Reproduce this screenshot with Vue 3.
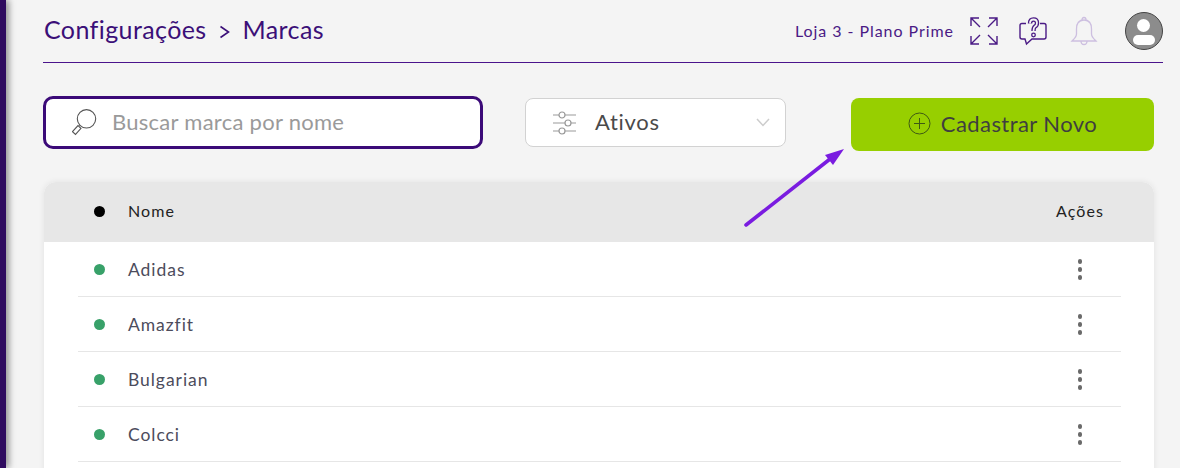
<script setup>
const brands = ['Adidas', 'Amazfit', 'Bulgarian', 'Colcci']
</script>

<template>
  <div class="page">
    <aside class="side"></aside>
    <main class="content">
      <header class="top">
        <div class="crumbs">
          <span class="crumb">Configurações</span>
          <svg class="crumb-arrow" width="10" height="14" viewBox="0 0 10 14">
            <path d="M0.5 1.5 L8.5 7 L0.5 12.500" fill="none" stroke="#3b0f78" stroke-width="1.6" />
          </svg>
          <span class="crumb">Marcas</span>
        </div>
        <div class="top-right">
          <span class="store">Loja 3 - Plano Prime</span>
          <svg class="icon-expand" width="30" height="30" viewBox="0 0 30 30" fill="none" stroke="#4a1a85" stroke-width="1.4">
            <path d="M2 10 V2 H10 M2 2 L11 11" />
            <path d="M20 2 H28 V10 M28 2 L19 11" />
            <path d="M2 20 V28 H10 M2 28 L11 19" />
            <path d="M20 28 H28 V20 M28 28 L19 19" />
          </svg>
          <svg class="icon-help" width="30" height="30" viewBox="0 0 30 30" fill="none">
            <path d="M7 7.500 H3 Q1 7.500 1 9.500 V21 Q1 23 3 23 H6 L7.500 28 L13 23 H25 Q27 23 27 21 V9.500 Q27 7.500 25 7.500 H21" stroke="#4a1a85" stroke-width="1.4" />
            <path d="M11 7.500 Q11 3.500 14.500 3.500 Q18 3.500 18 7 Q18 9.500 16 10.500 Q14.500 11.500 14.500 15" stroke="#4a1a85" stroke-width="4.400" />
            <path d="M11 7.500 Q11 3.500 14.500 3.500 Q18 3.500 18 7 Q18 9.500 16 10.500 Q14.500 11.500 14.500 15" stroke="#f4f4f4" stroke-width="1.800" />
            <circle cx="14.500" cy="19" r="1.800" stroke="#4a1a85" stroke-width="1.300" />
          </svg>
          <svg class="icon-bell" width="28" height="30" viewBox="0 0 28 30" fill="none" stroke="#cdbfe0" stroke-width="1.3">
            <path d="M14 4 C8 4 6.500 9 6.500 13 V18 C6.500 21 4 23 2 25 H26 C24 23 21.500 21 21.500 18 V13 C21.500 9 20 4 14 4 Z" />
            <path d="M12 4 Q12 1.500 14 1.500 Q16 1.500 16 4" />
            <path d="M11 25 Q11 28.500 14 28.500 Q17 28.500 17 25" />
          </svg>
          <div class="avatar">
            <span class="avatar-head"></span>
            <span class="avatar-body"></span>
          </div>
        </div>
      </header>

      <section class="filters">
        <div class="search">
          <svg width="28" height="28" viewBox="0 0 28 28" fill="none" stroke="#555" stroke-width="1.100">
            <circle cx="14.500" cy="9.800" r="9.200" />
            <path d="M8 16 L7.500 16.500 M9 19.400 L6 16.600 L0.500 22.600 L3.500 25.400 Z" />
          </svg>
          <span class="search-text">Buscar marca por nome</span>
        </div>
        <div class="select">
          <svg width="24" height="24" viewBox="0 0 24 24" fill="none" stroke="#999" stroke-width="1.200">
            <path d="M1 4 H7 M13 4 H24 M1 12 H13 M19 12 H24 M1 20 H7 M13 20 H24" />
            <circle cx="10" cy="4" r="3" />
            <circle cx="16" cy="12" r="3" />
            <circle cx="10" cy="20" r="3" />
          </svg>
          <span class="select-label">Ativos</span>
          <svg class="chevron" width="14" height="9" viewBox="0 0 14 9" fill="none" stroke="#ccc" stroke-width="1.500">
            <path d="M1 1 L7 7.500 L13 1" />
          </svg>
        </div>
        <button class="add">
          <svg width="23" height="23" viewBox="0 0 23 23" fill="none" stroke="#3f5a14" stroke-width="1">
            <circle cx="11.500" cy="11.500" r="10.500" />
            <path d="M11.500 6 V17 M6 11.500 H17" />
          </svg>
          <span class="add-text">Cadastrar Novo</span>
        </button>
      </section>

      <section class="table">
        <div class="thead">
          <span class="dot dot-black"></span>
          <span class="col-name">Nome</span>
          <span class="col-actions">Ações</span>
        </div>
        <div class="tbody">
          <div v-for="brand in brands" :key="brand" class="row">
            <span class="dot dot-green"></span>
            <span class="col-name">{{ brand }}</span>
            <span class="kebab"><i></i><i></i><i></i></span>
          </div>
        </div>
      </section>
    </main>

    <svg class="annotation" width="120" height="90" viewBox="0 0 120 90">
      <path d="M6 79 L90 13" stroke="#7a1ce0" stroke-width="3.600" stroke-linecap="round" fill="none" />
      <path d="M104 3 L85 9 L93 19 Z" fill="#7a1ce0" />
    </svg>
  </div>
</template>

<style>
html,
body {
  margin: 0;
  background: #f4f4f4;
}
</style>

<style scoped>
.page {
  position: relative;
  display: flex;
  width: 1180px;
  height: 468px;
  overflow: hidden;
  background: #f4f4f4;
  font-family: Lato, 'Noto Sans', sans-serif;
}

.side {
  flex: 0 0 6px;
  background: #2e0a5e;
  box-shadow: 2px 0 7px rgba(0, 0, 0, 0.55);
}

.content {
  flex: 1;
  padding-left: 37px;
  padding-right: 17px;
}

.top {
  display: flex;
  align-items: center;
  justify-content: space-between;
  height: 62px;
  border-bottom: 1px solid #4a148c;
}

.crumbs {
  display: flex;
  align-items: center;
  gap: 13px;
  margin-left: 1px;
  color: #3b0f78;
  font-size: 25px;
  letter-spacing: 0.4px;
}

.crumb {
  padding-bottom: 4px;
}

.crumb-arrow {
  margin-top: 1px;
}

.top-right {
  display: flex;
  align-items: center;
}

.store {
  padding-bottom: 2px;
  color: #4a1a85;
  font-size: 16px;
  letter-spacing: 0.95px;
}

.icon-expand {
  margin-left: 15px;
}

.icon-help {
  margin-left: 20px;
}

.icon-bell {
  margin-left: 21px;
}

.avatar {
  position: relative;
  width: 36px;
  height: 36px;
  margin-left: 27px;
  border: 1.500px solid #444;
  border-radius: 50%;
  background: #8c8c8c;
  overflow: hidden;
}

.avatar-head {
  position: absolute;
  top: 6px;
  left: 11px;
  width: 13px;
  height: 13px;
  border-radius: 50%;
  background: #fff;
}

.avatar-body {
  position: absolute;
  top: 22px;
  left: 7px;
  width: 22px;
  height: 10px;
  border-radius: 7px;
  background: #fff;
}

.filters {
  display: flex;
  align-items: flex-start;
  margin-top: 33px;
}

.search {
  display: flex;
  align-items: center;
  gap: 12px;
  box-sizing: border-box;
  width: 440px;
  height: 53px;
  padding-left: 26px;
  border: 3px solid #3b0a78;
  border-radius: 10px;
  background: #fff;
  color: #9a9a9a;
  font-size: 22px;
  letter-spacing: 0.27px;
}

.search-text {
  padding-bottom: 3px;
}

.select {
  display: flex;
  align-items: center;
  box-sizing: border-box;
  width: 261px;
  height: 49px;
  margin-top: 2px;
  margin-left: 42px;
  padding-left: 26px;
  padding-right: 15px;
  border: 1px solid #d2d2d2;
  border-radius: 8px;
  background: #fff;
  color: #4a4a4a;
  font-size: 22px;
  letter-spacing: 0.7px;
}

.select-label {
  margin-left: 19px;
  padding-bottom: 3px;
}

.chevron {
  margin-left: auto;
}

.add {
  display: flex;
  align-items: center;
  justify-content: center;
  gap: 10px;
  width: 303px;
  height: 53px;
  margin-top: 2px;
  margin-left: 65px;
  padding: 0 0 2px;
  border: 0;
  border-radius: 8px;
  background: #97cf00;
  color: #3f3f3f;
  font-family: inherit;
  font-size: 22px;
  letter-spacing: 0.43px;
}

.table {
  width: 1110px;
  min-height: 320px;
  margin-top: 31px;
  margin-left: 1px;
  border-radius: 12px 12px 0 0;
  background: #fff;
  box-shadow: 0 0 6px rgba(0, 0, 0, 0.08);
}

.thead {
  display: flex;
  align-items: center;
  height: 60px;
  padding-left: 50px;
  padding-right: 50px;
  border-radius: 12px 12px 0 0;
  background: #e7e7e7;
  color: #222;
  font-size: 16px;
  letter-spacing: 1.1px;
}

.thead .col-name,
.thead .col-actions {
  padding-bottom: 3px;
}

.thead .dot {
  margin-bottom: 1px;
}

.dot {
  width: 11px;
  height: 11px;
  border-radius: 50%;
}

.dot-black {
  background: #000;
}

.dot-green {
  background: #38a169;
}

.col-name {
  margin-left: 23px;
}

.col-actions {
  margin-left: auto;
}

.row {
  display: flex;
  align-items: center;
  box-sizing: border-box;
  height: 55px;
  margin-left: 34px;
  margin-right: 33px;
  padding-left: 16px;
  border-bottom: 1px solid #e6e6e6;
  color: #4c4c5c;
  font-size: 17.500px;
  letter-spacing: 0.95px;
}

.kebab {
  display: flex;
  flex-direction: column;
  gap: 3.500px;
  margin-top: 1px;
  margin-left: auto;
  margin-right: 39px;
}

.kebab i {
  display: block;
  width: 4.500px;
  height: 4.500px;
  border-radius: 50%;
  background: #6a6a6a;
}

.annotation {
  position: absolute;
  left: 740px;
  top: 146px;
}
</style>
